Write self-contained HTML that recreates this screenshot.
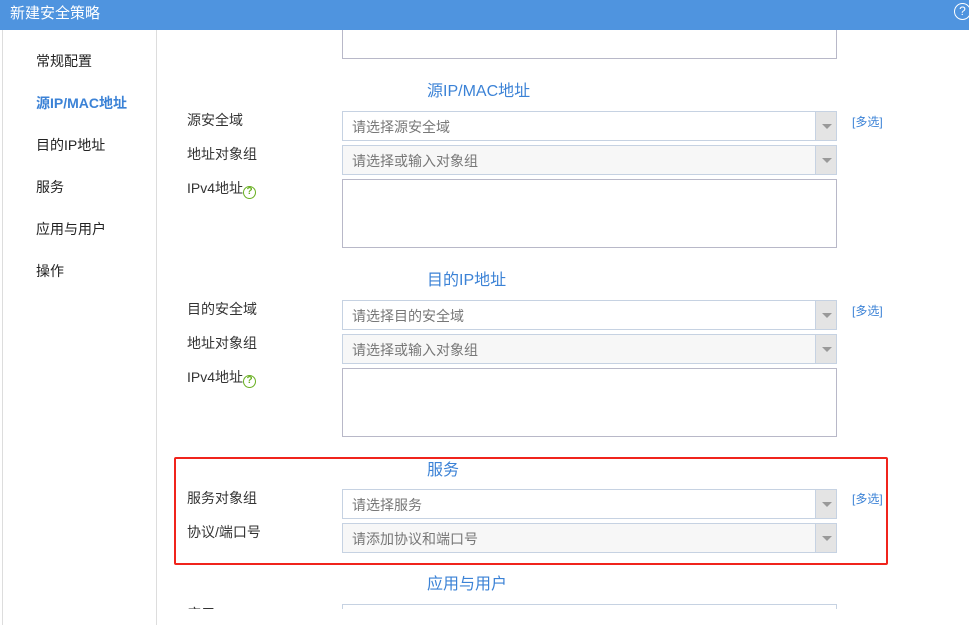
<!DOCTYPE html><html><head><meta charset="utf-8"><style>
*{margin:0;padding:0;box-sizing:border-box}
body{width:969px;height:625px;overflow:hidden;background:#fff;font-family:"Liberation Sans","Noto Sans CJK SC",sans-serif;font-size:14px;color:#333;position:relative}
.a{position:absolute}
.hd{left:0;top:0;width:969px;height:30px;background:#4f94df;color:#fff;font-size:15px;padding:2px 0 0 10px}
.nav{left:36px;font-size:14px;color:#222}
.t{font-size:16px;color:#3b82d6;left:427px}
.lb{left:187px;color:#333}
.sel{left:342px;width:495px;height:30px;border:1px solid #c6d2e2;background:#fff;color:#777;padding:5px 0 0 9px}
.sel.g{background:#f7f7f7}
.sel:after{content:"";position:absolute;right:0;top:0;width:20px;height:28px;background:#e4e4e4;border-left:1px solid #c6d2e2}
.sel:before{content:"";position:absolute;right:4px;top:12px;border:5px solid transparent;border-top:5px solid #999;z-index:2}
.ta{left:342px;width:495px;border:1px solid #b8b8c8}
.m{left:852px;color:#3b82d6;font-size:12px}
.q{display:inline-block;width:13px;height:13px;border:1.5px solid #6ab023;border-radius:50%;color:#6ab023;font-size:10px;line-height:10px;text-align:center;font-weight:bold;vertical-align:-1px}
</style></head><body>
<div class="a hd">新建安全策略</div>
<div class="a" style="left:954px;top:3px;width:17px;height:17px;border:1.5px solid #fff;border-radius:50%;color:#fff;font-size:12px;text-align:center;line-height:14px">?</div>
<div class="a" style="left:2px;top:30px;width:1px;height:595px;background:#ddd"></div>
<div class="a" style="left:156px;top:30px;width:1px;height:595px;background:#ddd"></div>
<div class="a nav" style="top:51px">常规配置</div>
<div class="a nav" style="top:93px;color:#3b82d6;font-weight:bold">源IP/MAC地址</div>
<div class="a nav" style="top:135px">目的IP地址</div>
<div class="a nav" style="top:177px">服务</div>
<div class="a nav" style="top:219px">应用与用户</div>
<div class="a nav" style="top:261px">操作</div>

<div class="a ta" style="top:30px;height:29px;border-top:none"></div>
<div class="a t" style="top:77px">源IP/MAC地址</div>
<div class="a lb" style="top:110px">源安全域</div>
<div class="a sel" style="top:111px">请选择源安全域</div>
<div class="a m" style="top:113px">[多选]</div>
<div class="a lb" style="top:144px">地址对象组</div>
<div class="a sel g" style="top:145px">请选择或输入对象组</div>
<div class="a lb" style="top:178px">IPv4地址<span class="q">?</span></div>
<div class="a ta" style="top:179px;height:69px"></div>

<div class="a t" style="top:266px">目的IP地址</div>
<div class="a lb" style="top:299px">目的安全域</div>
<div class="a sel" style="top:300px">请选择目的安全域</div>
<div class="a m" style="top:302px">[多选]</div>
<div class="a lb" style="top:333px">地址对象组</div>
<div class="a sel g" style="top:334px">请选择或输入对象组</div>
<div class="a lb" style="top:367px">IPv4地址<span class="q">?</span></div>
<div class="a ta" style="top:368px;height:69px"></div>

<div class="a" style="left:174px;top:457px;width:714px;height:108px;border:2px solid #f0241c;border-radius:2px"></div>
<div class="a t" style="top:456px">服务</div>
<div class="a lb" style="top:488px">服务对象组</div>
<div class="a sel" style="top:489px">请选择服务</div>
<div class="a m" style="top:490px">[多选]</div>
<div class="a lb" style="top:522px">协议/端口号</div>
<div class="a sel g" style="top:523px">请添加协议和端口号</div>

<div class="a t" style="top:570px">应用与用户</div>
<div class="a" style="left:157px;top:604px;width:812px;height:21px;overflow:hidden">
<div class="a" style="left:30px;top:0px;">应用</div>
<div class="a" style="left:185px;top:0;width:495px;height:30px;border:1px solid #c6d2e2"></div>
</div>
<div class="a" style="left:157px;top:609px;width:812px;height:16px;background:#fff"></div>
</body></html>
